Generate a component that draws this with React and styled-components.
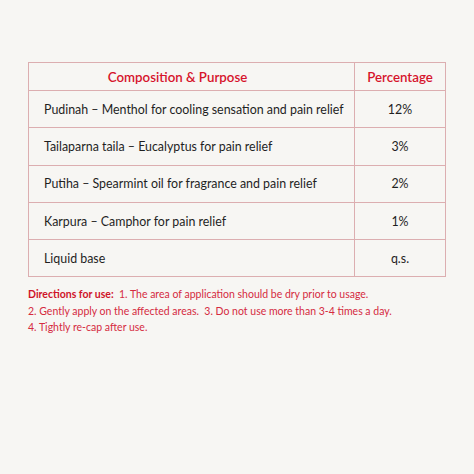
import React from "react";
import styled, { createGlobalStyle } from "styled-components";

const Global = createGlobalStyle`
  html, body { margin: 0; padding: 0; background: #f7f6f3; }
  body { font-family: Lato, "Open Sans", sans-serif; }
`;

const Page = styled.div`
  width: 474px;
  height: 474px;
  box-sizing: border-box;
  padding: 62px 29px 0 28px;
  background: #f7f6f3;
`;

const Table = styled.table`
  width: 417px;
  border-collapse: collapse;
  table-layout: fixed;
`;

const Cell = styled.td`
  border: 1px solid #dcaeb0;
  height: ${(p) => (p.$head ? 28 : 37.3)}px;
  padding: 0 ${(p) => (p.$center ? 0 : 15)}px;
  text-align: ${(p) => (p.$center ? "center" : "left")};
  font-size: 12.4px;
  color: #1f1f1f;
  white-space: nowrap;
  box-sizing: border-box;
`;

const HeadCell = styled(Cell).attrs({ as: "th" })`
  color: #d6132b;
  font-weight: 600;
  font-size: 13.3px;
  text-align: center;
  padding: ${(p) => (p.$shift ? "0 28px 0 0" : "0")};
`;

const Notes = styled.div`
  margin-top: 9px;
  font-size: 10.5px;
  line-height: 16.5px;
  color: #d52b3f;
`;

const Strong = styled.strong`
  font-weight: 700;
  color: #cf1329;
`;

const rows = [
  ["Pudinah – Menthol for cooling sensation and pain relief", "12%"],
  ["Tailaparna taila – Eucalyptus for pain relief", "3%"],
  ["Putiha – Spearmint oil for fragrance and pain relief", "2%"],
  ["Karpura – Camphor for pain relief", "1%"],
  ["Liquid base", "q.s."],
];

export default function App() {
  return (
    <Page>
      <Global />
      <Table>
        <colgroup>
          <col style={{ width: 326 }} />
          <col style={{ width: 91 }} />
        </colgroup>
        <thead>
          <tr>
            <HeadCell $head $shift>Composition &amp; Purpose</HeadCell>
            <HeadCell $head>Percentage</HeadCell>
          </tr>
        </thead>
        <tbody>
          {rows.map(([a, b]) => (
            <tr key={a}>
              <Cell>{a}</Cell>
              <Cell $center>{b}</Cell>
            </tr>
          ))}
        </tbody>
      </Table>
      <Notes>
        <Strong>Directions for use:</Strong>&nbsp; 1. The area of application should be dry prior to usage.
        <br />
        2. Gently apply on the affected areas.&nbsp; 3. Do not use more than 3-4 times a day.
        <br />
        4. Tightly re-cap after use.
      </Notes>
    </Page>
  );
}
